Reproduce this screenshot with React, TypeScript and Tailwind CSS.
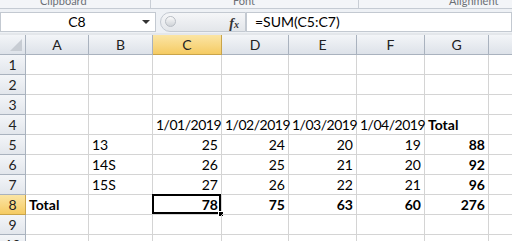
import React from "react";

const cols = [
  { w: 63, l: "A" },
  { w: 64, l: "B" },
  { w: 69, l: "C" },
  { w: 67, l: "D" },
  { w: 68, l: "E" },
  { w: 68, l: "F" },
  { w: 64, l: "G" },
];

type Cell = { t: string; a?: "l" | "r"; b?: boolean; d?: boolean };

const data: Record<number, Record<number, Cell>> = {
  4: {
    2: { t: "1/01/2019", d: true },
    3: { t: "1/02/2019", d: true },
    4: { t: "1/03/2019", d: true },
    5: { t: "1/04/2019", d: true },
    6: { t: "Total", b: true },
  },
  5: { 1: { t: "13" }, 2: { t: "25", a: "r" }, 3: { t: "24", a: "r" }, 4: { t: "20", a: "r" }, 5: { t: "19", a: "r" }, 6: { t: "88", a: "r", b: true } },
  6: { 1: { t: "14S" }, 2: { t: "26", a: "r" }, 3: { t: "25", a: "r" }, 4: { t: "21", a: "r" }, 5: { t: "20", a: "r" }, 6: { t: "92", a: "r", b: true } },
  7: { 1: { t: "15S" }, 2: { t: "27", a: "r" }, 3: { t: "26", a: "r" }, 4: { t: "22", a: "r" }, 5: { t: "21", a: "r" }, 6: { t: "96", a: "r", b: true } },
  8: {
    0: { t: "Total", b: true },
    2: { t: "78", a: "r", b: true },
    3: { t: "75", a: "r", b: true },
    4: { t: "63", a: "r", b: true },
    5: { t: "60", a: "r", b: true },
    6: { t: "276", a: "r", b: true },
  },
};

const font = { fontFamily: "Lato, 'Open Sans', sans-serif" };

export default function App() {
  const rows = [1, 2, 3, 4, 5, 6, 7, 8, 9, 10];
  return (
    <div className="w-[512px] h-[241px] overflow-hidden bg-white text-[#000]" style={font}>
      {/* ribbon bottom */}
      <div className="h-[9px] bg-[#f3f5f8] border-b border-[#c5cbd3] relative overflow-hidden text-[11px] leading-[11px] text-[#6b6f75]">
        <div className="flex h-full">
          <div className="w-[141px] relative"><span className="absolute left-[40px] -top-[5px]">Clipboard</span></div>
          <div className="w-[10px] border-r border-[#c9ced5]" />
          <div className="w-[208px] border-r border-[#c9ced5] relative"><span className="absolute left-[82px] -top-[5px]">Font</span></div>
          <div className="flex-1 relative"><span className="absolute left-[90px] -top-[5px]">Alignment</span></div>
        </div>
      </div>
      {/* formula bar */}
      <div className="h-[24px] bg-[#eef1f5] flex items-center pt-[1px]">
        <div className="w-[156px] h-[20px] bg-white border border-[#c3c9d1] flex items-center">
          <div className="flex-1 text-center text-[14px] leading-none pl-[14px]">C8</div>
          <div className="w-[14px] flex items-center justify-center mr-[2px]">
            <div className="w-0 h-0 border-l-[4px] border-r-[4px] border-t-[4px] border-l-transparent border-r-transparent border-t-[#333]" />
          </div>
        </div>
        <div className="w-[86px] h-[20px] ml-[4px] rounded-l-full bg-gradient-to-b from-[#f5f6f8] to-[#e3e6ea] border border-[#c3c9d1] flex items-center relative">
          <div className="ml-[4px] w-[11px] h-[11px] rounded-full bg-gradient-to-b from-[#fafafa] to-[#cfd3d8] border border-[#b8bdc4]" />
          <span className="absolute right-[6px] top-[0px] text-[14px] italic font-bold text-[#333]" style={{ fontFamily: "'Liberation Serif', serif" }}>
            f<span className="text-[10px]">x</span>
          </span>
        </div>
        <div className="flex-1 h-[20px] bg-white border border-[#c3c9d1] flex items-center pl-[8px] text-[14px] leading-none">
          =SUM(C5:C7)
        </div>
      </div>
      <div className="h-[2px] bg-[#e4e7eb]" />
      {/* grid */}
      <div className="grid grid-cols-[26px_63px_64px_69px_67px_68px_68px_64px_1fr]">
        <div className="h-[20px] bg-gradient-to-b from-[#f3f5f8] to-[#dde2e9] border-r border-b border-[#a9b2be] relative">
          <svg className="absolute right-[3px] bottom-[3px]" width="12" height="12"><polygon points="12,0 12,12 0,12" fill="#c7ccd3" /></svg>
        </div>
        {cols.map((c) => (
          <div
            key={c.l}
            className={
              c.l === "C"
                ? "h-[20px] flex items-center justify-center text-[14px] bg-gradient-to-b from-[#fbe5a4] to-[#f5cb62] border-r border-b border-[#c9a44a] text-[#222]"
                : "h-[20px] flex items-center justify-center text-[14px] bg-gradient-to-b from-[#f3f5f8] to-[#dde2e9] border-r border-b border-[#a9b2be] text-[#222]"
            }
          >
            {c.l}
          </div>
        ))}
        <div className="h-[20px] bg-gradient-to-b from-[#f3f5f8] to-[#dde2e9] border-b border-[#a9b2be]" />
        {rows.map((r) => (
          <React.Fragment key={r}>
            <div
              className={
                r === 8
                  ? "h-[20px] flex items-center justify-center text-[14px] bg-gradient-to-b from-[#fbe5a4] to-[#f5cb62] border-r border-b border-[#c9a44a] text-[#222]"
                  : "h-[20px] flex items-center justify-center text-[14px] bg-gradient-to-b from-[#f3f5f8] to-[#e2e6ec] border-r border-b border-[#a9b2be] text-[#222]"
              }
            >
              {r}
            </div>
            {cols.map((c, ci) => {
              const cell = data[r]?.[ci];
              const sel = r === 8 && ci === 2;
              return (
                <div
                  key={c.l}
                  className={
                    "h-[20px] border-r border-b border-[#d4d4d4] flex items-end pb-[2px] text-[14px] leading-none whitespace-nowrap relative " +
                    (cell?.a === "r" ? "justify-end pr-[3px] " : "pl-[3px] ") +
                    (cell?.b ? "font-bold " : "") +
                    (cell?.d ? "tracking-[-0.5px]" : "")
                  }
                >
                  {cell?.t}
                  {sel && (
                    <>
                      <div className="absolute -left-[1px] -top-[1px] right-0 bottom-0 border-2 border-black" />
                      <div className="absolute -right-[3px] -bottom-[3px] w-[6px] h-[6px] bg-black border border-white" />
                    </>
                  )}
                </div>
              );
            })}
            <div className="h-[20px] border-b border-[#d4d4d4]" />
          </React.Fragment>
        ))}
      </div>
    </div>
  );
}
